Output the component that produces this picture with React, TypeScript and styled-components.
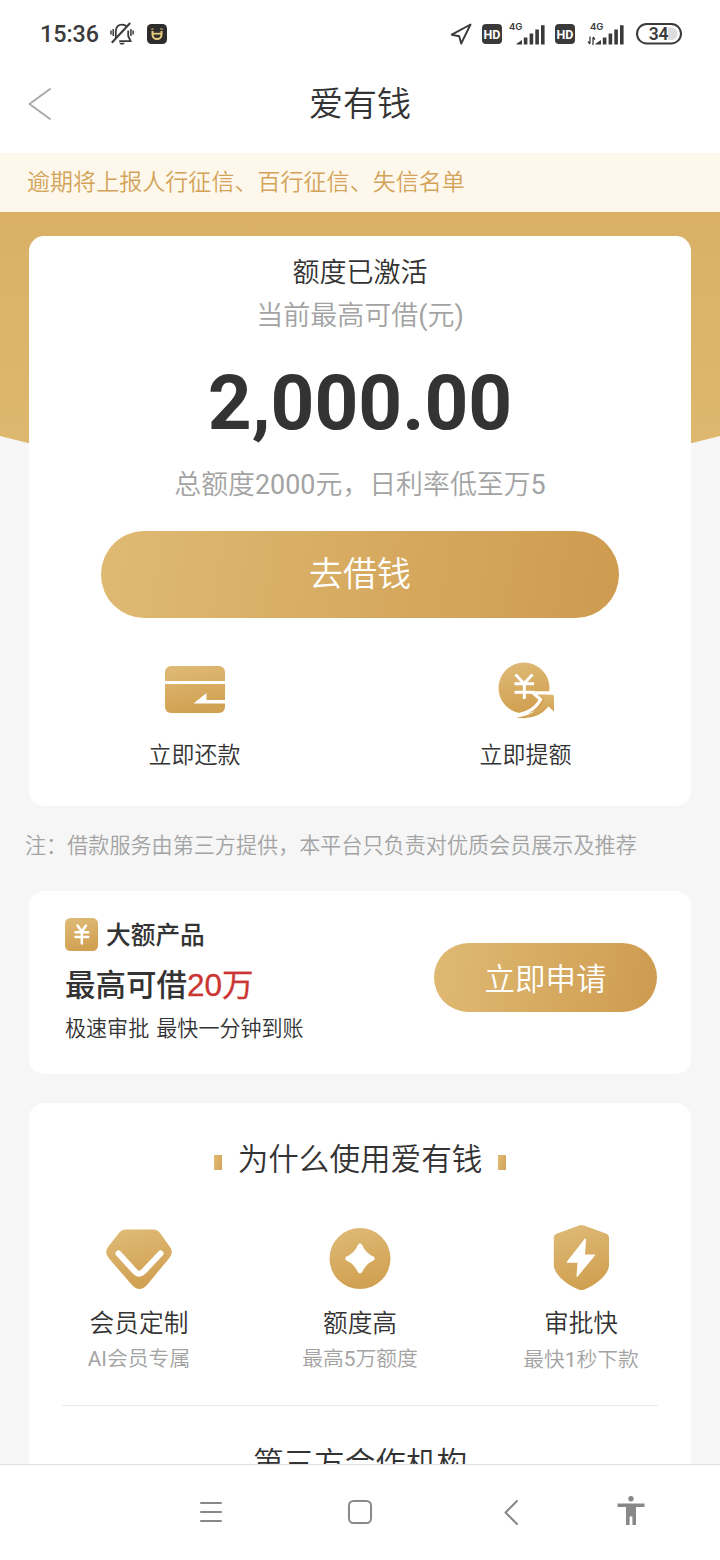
import React from 'react';
import styled, { createGlobalStyle } from 'styled-components';

const GlobalStyle = createGlobalStyle`
  * { box-sizing: border-box; }
  body { margin: 0; background: #f5f5f5; }
  svg { display: block; flex: none; }
`;

const Page = styled.div`
  width: 720px;
  height: 1560px;
  display: flex;
  flex-direction: column;
  overflow: hidden;
  background: #f6f6f6;
  color: #333;
  font-family: Roboto, 'Noto Sans CJK SC', sans-serif;
`;

const Text = styled.div<{ $size: number; $line: number; $color?: string; $weight?: number }>`
  font-size: ${(p) => p.$size}px;
  line-height: ${(p) => p.$line}px;
  color: ${(p) => p.$color ?? '#333'};
  font-weight: ${(p) => p.$weight ?? 350};
  white-space: nowrap;
`;

const Latin = styled.span`
  font-weight: 400;
`;

const StatusBar = styled.div`
  height: 68px;
  flex: none;
  display: flex;
  align-items: center;
  justify-content: space-between;
  padding: 0 37px 0 40px;
  background: #fff;
`;

const StatusGroup = styled.div`
  display: flex;
  align-items: center;
`;

const Clock = styled.div`
  width: 69px;
  font: 500 23.3px/30px Roboto, sans-serif;
  color: #3a3a3a;
`;

const TitleBar = styled.header`
  height: 85px;
  flex: none;
  display: grid;
  grid-template-columns: 80px 1fr 80px;
  align-items: center;
  justify-items: center;
  background: #fff;
  padding-bottom: 14px;
`;

const Notice = styled.div`
  height: 59px;
  flex: none;
  padding-left: 27px;
  background: #fef8ec;
`;

const Content = styled.main`
  flex: 1;
  min-height: 0;
  overflow: hidden;
`;

const Hero = styled.section`
  display: grid;
`;

const HeroBackdrop = styled.div`
  grid-area: 1 / 1;
  height: 280px;
  background: linear-gradient(#d9b066, #dfb970);
  clip-path: path('M0 0H720V224Q360 318 0 224Z');
`;

const Card = styled.section`
  margin: 0 29px;
  border-radius: 15px;
  background: #fff;
`;

const QuotaCard = styled(Card)`
  grid-area: 1 / 1;
  z-index: 1;
  height: 570px;
  margin-top: 24px;
  display: flex;
  flex-direction: column;
  align-items: center;
  padding-top: 14px;
`;

const Amount = styled.div`
  margin-top: 16px;
  height: 110px;
  font-size: 76.5px;
  line-height: 100px;
  font-weight: 700;
  color: #333;
`;

const Terms = styled.div`
  height: 68px;
`;

const GoldButton = styled.button<{ $w: number; $h: number; $size: number; $lift?: number }>`
  width: ${(p) => p.$w}px;
  height: ${(p) => p.$h}px;
  flex: none;
  border: 0;
  padding: 0 0 ${(p) => p.$lift ?? 2}px;
  border-radius: ${(p) => p.$h / 2}px;
  background: linear-gradient(100deg, #dfba73, #ce9b4f);
  color: #fff;
  font-family: inherit;
  font-weight: 350;
  font-size: ${(p) => p.$size}px;
`;

const Actions = styled.div`
  align-self: stretch;
  display: grid;
  grid-template-columns: 1fr 1fr;
  margin-top: 43px;
`;

const Action = styled.div`
  display: flex;
  flex-direction: column;
  align-items: center;
`;

const Footnote = styled.div`
  height: 85px;
  padding: 24px 0 0 25px;
`;

const ProductCard = styled(Card)`
  height: 183px;
  display: flex;
  justify-content: space-between;
  padding: 26px 34px 0 36px;

  ${GoldButton} { margin-top: 26px; }
`;

const ProductHead = styled.div`
  display: flex;
  align-items: flex-start;
  gap: 8px;
  height: 38px;

  svg { margin-top: 1px; }
`;

const ProductNote = styled(Text)`
  word-spacing: 2px;
`;

const Red = styled.span`
  font-family: 'Liberation Sans', 'Noto Sans CJK SC', sans-serif;
  font-weight: 400;
  font-size: 31.5px;
  -webkit-text-stroke: 0.3px #cb3634;
  color: #cb3634;
`;

const WhyCard = styled(Card)`
  height: 500px;
  margin-top: 29px;
  padding-top: 35px;
`;

const WhyTitle = styled.div`
  display: flex;
  align-items: center;
  justify-content: center;
  gap: 16px;
`;

const Mark = styled.i`
  width: 8px;
  height: 15px;
  margin-top: 5px;
  background: linear-gradient(100deg, #dfba73, #d3a458);
`;

const Features = styled.div`
  display: grid;
  grid-template-columns: repeat(3, 221px);
  justify-content: center;
  margin: 43px 33px 0;
  height: 181px;
  border-bottom: 1px solid #e9e9e9;
`;

const Feature = styled.div`
  display: flex;
  flex-direction: column;
  align-items: center;
`;

const Partners = styled.div`
  display: flex;
  justify-content: center;
  padding-top: 36px;
`;

const NavBar = styled.nav`
  height: 96px;
  flex: none;
  display: flex;
  align-items: center;
  padding: 0 0 2px 195px;
  border-top: 1px solid #e0e0e0;
  background: #fff;
`;

const NavItem = styled.div<{ $w: number }>`
  width: ${(p) => p.$w}px;
`;

const Gold = ({ id }: { id: string }) => (
  <defs>
    <linearGradient id={id} x1="0" y1="0" x2="0.25" y2="1">
      <stop offset="0" stopColor="#dfbb78" />
      <stop offset="1" stopColor="#d1a152" />
    </linearGradient>
  </defs>
);

const MutedBell = () => (
  <svg width="26" height="26" viewBox="0 0 26 26" fill="none" stroke="#3a3a3a" strokeWidth="1.8">
    <path d="M6.800 17V10.500C6.800 6 9.200 3.600 13 3.600c2.100 0 3.700.7 4.800 2M19.200 9.500V15l2.400 5.200H10.200" />
    <path d="M2.800 21.800 21.200 2" strokeWidth="2" />
    <path d="M4.200 8v7M2 9.500v4M21.900 8v7M24.100 9.500v4" strokeWidth="1.500" />
    <path d="M10 21.800h6l-1.600 1.800h-2.800z" fill="#3a3a3a" stroke="none" />
  </svg>
);

const AppBadge = () => (
  <svg width="20" height="20" viewBox="0 0 20 20" fill="none">
    <rect width="20" height="20" rx="4.500" fill="#2e2d2b" />
    <path d="M5.500 7v3.500a4.500 4.500 0 0 0 9 0V7" stroke="#e8cc7c" strokeWidth="2" />
    <path d="M5.500 9.700h9" stroke="#e8cc7c" strokeWidth="1.800" />
    <path d="M4.200 5h2.600M13.200 5h2.600" stroke="#e8cc7c" strokeWidth="1.200" />
  </svg>
);

const HdBadge = () => (
  <svg width="20" height="20" viewBox="0 0 20 20">
    <rect width="20" height="20" rx="4" fill="#3a3a3a" />
    <text x="10" y="14.500" textAnchor="middle" fontFamily="Roboto, sans-serif" fontSize="12.500" fontWeight="700" fill="#fff">HD</text>
  </svg>
);

const Signal = ({ data }: { data?: boolean }) => (
  <svg width="40" height="26" viewBox="0 0 40 26" fill="#3a3a3a">
    <text x={data ? 3 : 1} y="8.500" fontFamily="Inter, sans-serif" fontSize="9.500" fontWeight="600">4G</text>
    <path d="M8.500 23.500v-.8l5.500-3.600v4.400zM15.800 16.500h3.600v7h-3.600zM21.600 12.500h3.600v11h-3.600zM27.300 8.500h3.600v15h-3.600zM33 4.200h3.600v19.300h-3.600z" />
    {data && (
      <path d="M3 15.500v7M1 20.500l2 2.500M6 24v-7.500M8 18.500l-2-2.500" fill="none" stroke="#3a3a3a" strokeWidth="1.300" />
    )}
  </svg>
);

const Battery = () => (
  <svg width="48" height="24" viewBox="0 0 48 24">
    <path d="M33 5.500h4a6.300 6.300 0 0 1 0 12.500h-4z" fill="#ddd" />
    <rect x="2" y="2" width="44" height="19.500" rx="9.700" fill="none" stroke="#3a3a3a" strokeWidth="2" />
    <text x="23.500" y="18" textAnchor="middle" fontFamily="Roboto, sans-serif" fontSize="17.500" fontWeight="600" letterSpacing="-0.300" fill="#3a3a3a">34</text>
  </svg>
);

const Locate = () => (
  <svg width="22" height="22" viewBox="0 0 22 22" fill="none" stroke="#3a3a3a" strokeWidth="1.900" strokeLinejoin="round">
    <path d="M20.500 1.500 1.800 11.700l7.400 1.600 2 7.200z" />
  </svg>
);

const Spacer = styled.span<{ $w: number }>`
  width: ${(p) => p.$w}px;
`;

const RepayIcon = () => (
  <svg width="60" height="60" viewBox="0 0 60 60">
    <Gold id="g-repay" />
    <rect y="5" width="60" height="47" rx="6" fill="url(#g-repay)" />
    <path d="M0 21.500h60" stroke="#fff" strokeWidth="3" />
    <path d="M28.500 42.500 41.500 32v7H60v3.500z" fill="#fff" />
  </svg>
);

const RaiseIcon = () => (
  <svg width="60" height="60" viewBox="0 0 60 60" fill="none">
    <Gold id="g-raise" />
    <circle cx="28" cy="27" r="25.500" fill="url(#g-raise)" />
    <path d="M20 56.500Q41 54 49 38.500L42 33.500H55.500Q58 33.500 58 36V50.500L52.500 45.500Q41 60 20 56.500z" fill="url(#g-raise)" />
    <path d="M58 31.800H37L44.500 38.500Q37 53.500 13 54.800" stroke="#fff" strokeWidth="3.200" />
    <path d="m19.500 13.500 8.500 9 8.500-9M18.500 22.800h19.500M18.500 31.300h20M28.300 22.500v15.500" stroke="#fff" strokeWidth="3" />
  </svg>
);

const YenIcon = () => (
  <svg width="33" height="33" viewBox="0 0 33 33" fill="none">
    <Gold id="g-yen" />
    <rect width="33" height="33" rx="5.500" fill="url(#g-yen)" />
    <path d="m12.500 7.500 4.300 6 4.200-6M10.500 14.200h12.700M10.500 19h12.700M16.800 14v11.500" stroke="#fff" strokeWidth="2.500" strokeLinecap="round" />
  </svg>
);

const DiamondIcon = () => (
  <svg width="66" height="66" viewBox="0 0 66 66" fill="none">
    <Gold id="g-dia" />
    <path d="M19.500 4.500h28q4 0 6.500 3.500l10 14q4 6-1 11.500L41 60q-7.500 8-15 0L3 33.500q-5-5.500-1-11.500L13 8q2.500-3.500 6.500-3.500z" fill="url(#g-dia)" />
    <path d="m12.500 28.500 16.500 18q4 4.500 8.500 0l17-18" stroke="#fff" strokeWidth="6" strokeLinecap="round" />
  </svg>
);

const StarIcon = () => (
  <svg width="66" height="66" viewBox="0 0 66 66">
    <Gold id="g-star" />
    <circle cx="33" cy="33.500" r="30.500" fill="url(#g-star)" />
    <path d="M31 19.700q2-2.200 4 0 3.500 8.300 11.500 11.900 2.500 1.900 0 3.800-8 3.600-11.500 11.900-2 2.200-4 0-3.500-8.300-11.500-11.900-2.500-1.900 0-3.800 8-3.600 11.500-11.900z" fill="#fff" />
  </svg>
);

const ShieldIcon = () => (
  <svg width="66" height="66" viewBox="0 0 66 66">
    <Gold id="g-shield" />
    <path d="M31 .500q2.500-1 5 0l22.500 8.200q2.500 1 2.500 4V40c0 8-10 18.500-24.500 24.500q-3 1.200-6 0C16 58.500 5.800 48 5.800 40V12.700q0-3 2.700-4z" fill="url(#g-shield)" />
    <path d="M36.500 14 19 36.500q-.8 1.200.5 1.200h10L28.500 51q0 1.500 1.200.4L47 30.500q.6-1-.6-1H37L38 14.500q-.3-1.500-1.500-.5z" fill="#fff" />
  </svg>
);

export default function App() {
  return (
    <Page>
      <GlobalStyle />
      <StatusBar>
        <StatusGroup>
          <Clock>15:36</Clock>
          <MutedBell />
          <Spacer $w={12} />
          <AppBadge />
        </StatusGroup>
        <StatusGroup>
          <Locate />
          <Spacer $w={10} />
          <HdBadge />
          <Spacer $w={6} />
          <Signal />
          <Spacer $w={7} />
          <HdBadge />
          <Spacer $w={12} />
          <Signal data />
          <Spacer $w={8} />
          <Battery />
        </StatusGroup>
      </StatusBar>
      <TitleBar>
        <svg width="26" height="34" viewBox="0 0 26 34" fill="none" stroke="#aaa" strokeWidth="2" strokeLinecap="round" strokeLinejoin="round">
          <path d="M23 2 2.500 17 23 32" />
        </svg>
        <Text $size={34} $line={50}>爱有钱</Text>
      </TitleBar>
      <Notice>
        <Text $size={23.050} $line={59} $color="#d3a359">逾期将上报人行征信、百行征信、失信名单</Text>
      </Notice>
      <Content>
        <Hero>
          <HeroBackdrop />
          <QuotaCard>
            <Text $size={27} $line={46}>额度已激活</Text>
            <Text $size={27} $line={41} $color="#a3a3a3">当前最高可借<Latin>(</Latin>元<Latin>)</Latin></Text>
            <Amount>2,000.00</Amount>
            <Terms>
              <Text $size={26.900} $line={45} $color="#a3a3a3">总额度<Latin>2000</Latin>元，日利率低至万<Latin>5</Latin></Text>
            </Terms>
            <GoldButton $w={518} $h={87} $size={34} $lift={6}>去借钱</GoldButton>
            <Actions>
              <Action>
                <RepayIcon />
                <Text $size={23} $line={70}>立即还款</Text>
              </Action>
              <Action>
                <RaiseIcon />
                <Text $size={23} $line={70}>立即提额</Text>
              </Action>
            </Actions>
          </QuotaCard>
        </Hero>
        <Footnote>
          <Text $size={21.100} $line={32} $color="#a3a3a3">注：借款服务由第三方提供，本平台只负责对优质会员展示及推荐</Text>
        </Footnote>
        <ProductCard>
          <div>
            <ProductHead>
              <YenIcon />
              <Text $size={24.700} $line={38} $weight={500}>大额产品</Text>
            </ProductHead>
            <Text $size={30.500} $line={60} $weight={500}>最高可借<Red>20万</Red></Text>
            <ProductNote $size={21.050} $line={25}>极速审批 最快一分钟到账</ProductNote>
          </div>
          <GoldButton $w={223} $h={69} $size={30.500}>立即申请</GoldButton>
        </ProductCard>
        <WhyCard>
          <WhyTitle>
            <Mark />
            <Text $size={30.600} $line={44}>为什么使用爱有钱</Text>
            <Mark />
          </WhyTitle>
          <Features>
            <Feature>
              <DiamondIcon />
              <Text $size={24.700} $line={65}>会员定制</Text>
              <Text $size={20.800} $line={6} $color="#a3a3a3"><Latin>AI</Latin>会员专属</Text>
            </Feature>
            <Feature>
              <StarIcon />
              <Text $size={24.700} $line={65}>额度高</Text>
              <Text $size={20.800} $line={6} $color="#a3a3a3">最高<Latin>5</Latin>万额度</Text>
            </Feature>
            <Feature>
              <ShieldIcon />
              <Text $size={24.700} $line={66}>审批快</Text>
              <Text $size={20.800} $line={6} $color="#a3a3a3">最快<Latin>1</Latin>秒下款</Text>
            </Feature>
          </Features>
          <Partners>
            <Text $size={30.600} $line={44}>第三方合作机构</Text>
          </Partners>
        </WhyCard>
      </Content>
      <NavBar>
        <NavItem $w={148}>
          <svg width="32" height="32" viewBox="0 0 32 32" stroke="#888" strokeWidth="2" strokeLinecap="round">
            <path d="M6 7h20M6 16h20M6 25h20" />
          </svg>
        </NavItem>
        <NavItem $w={153}>
          <svg width="34" height="34" viewBox="0 0 34 34" fill="none" stroke="#888" strokeWidth="2">
            <rect x="6" y="6" width="22" height="22" rx="4.500" />
          </svg>
        </NavItem>
        <NavItem $w={119}>
          <svg width="30" height="30" viewBox="0 0 30 30" fill="none" stroke="#888" strokeWidth="2" strokeLinecap="round" strokeLinejoin="round">
            <path d="M21 4 9.500 15.500 21 27" />
          </svg>
        </NavItem>
        <NavItem $w={34}>
          <svg width="32" height="32" viewBox="0 0 32 32" fill="#888">
            <circle cx="16" cy="2.800" r="2.700" />
            <path d="M2.500 7.500h27V11H21v18h-3.600v-8.500h-2.800V29H11V11H2.500z" />
          </svg>
        </NavItem>
      </NavBar>
    </Page>
  );
}
